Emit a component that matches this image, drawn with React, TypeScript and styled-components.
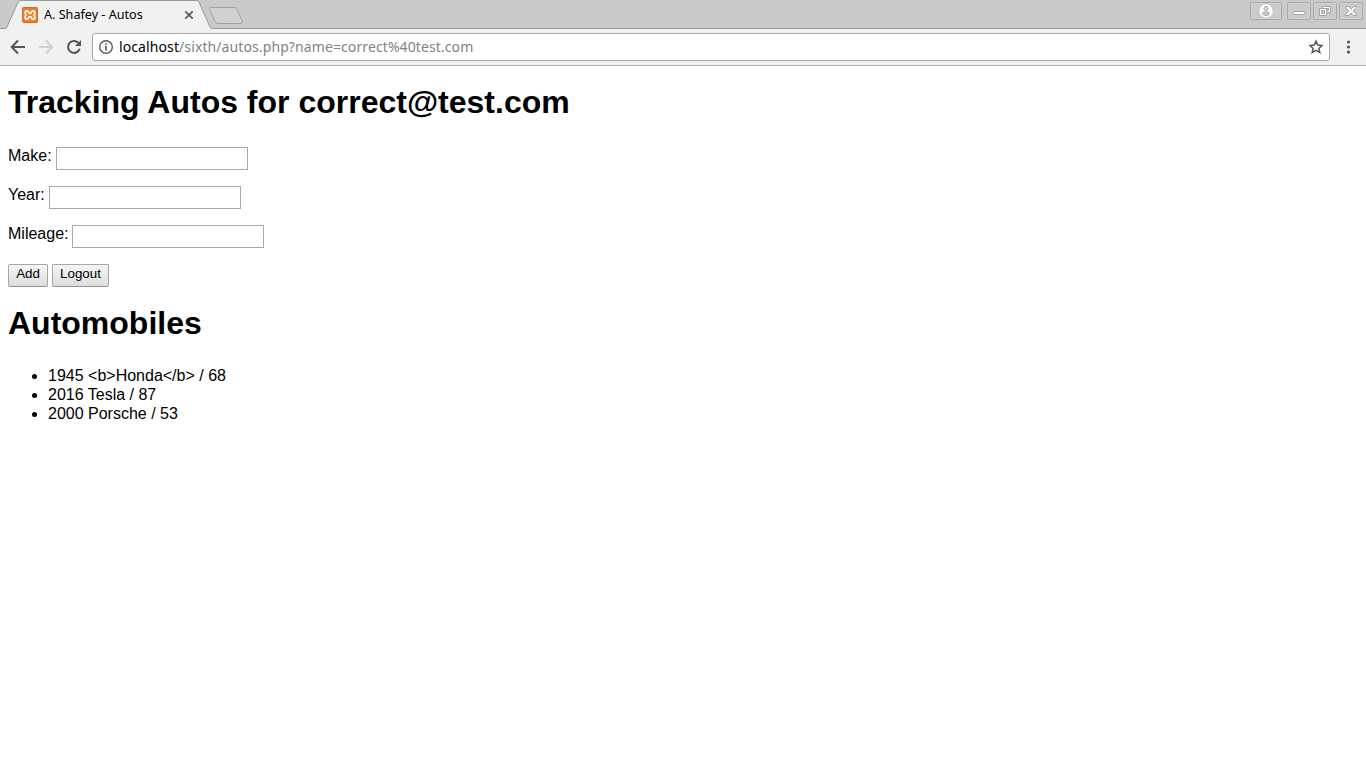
import React from "react";
import styled, { createGlobalStyle } from "styled-components";

const GlobalStyle = createGlobalStyle`
  body { margin: 0; background: #fff; }
  * { box-sizing: border-box; }
`;

const Browser = styled.div`
  height: 768px;
  overflow: hidden;
  display: flex;
  flex-direction: column;
  font-family: "Noto Sans", sans-serif;
`;

const TabStrip = styled.header`
  height: 29px;
  flex: none;
  display: flex;
  align-items: flex-start;
  background: #cacaca;
  box-shadow: inset 0 -1px #9b9b9b;
`;

const Tab = styled.div`
  position: relative;
  width: 213px;
  height: 29px;
  display: flex;
  align-items: center;
  padding: 1px 0 0 22px;
`;

const TabShape = styled.svg`
  position: absolute;
  left: 0;
  top: 0;
`;

const Favicon = styled.svg`
  position: relative;
  flex: none;
  margin-right: 6px;
`;

const TabTitle = styled.span`
  position: relative;
  width: 140px;
  font-size: 12.6px;
  line-height: 18px;
  color: #000;
  white-space: nowrap;
`;

const CloseIcon = styled.svg`
  position: relative;
  flex: none;
`;

const NewTab = styled.svg`
  margin: 6px 0 0 -5px;
  position: relative;
`;

const WindowControls = styled.div`
  display: flex;
  gap: 2px;
  margin: 2px 3px 0 auto;
`;

const WindowButton = styled.div<{ $width: number; $gapAfter?: number }>`
  width: ${(p) => p.$width}px;
  height: 18px;
  margin-right: ${(p) => p.$gapAfter ?? 0}px;
  display: flex;
  align-items: center;
  justify-content: center;
  border: 1px solid #a9a9a9;
  border-radius: 2px;
  background: #cbcbcb;
  box-shadow: inset 0 0 0 1px #d0d0d0;
`;

const Toolbar = styled.nav`
  height: 37px;
  flex: none;
  display: flex;
  align-items: center;
  padding: 0 10px 1px 10px;
  background: #f1f1f1;
  border-bottom: 1px solid #b4b4b4;
`;

const ToolIcon = styled.svg<{ $gap: number }>`
  flex: none;
  margin-right: ${(p) => p.$gap}px;
`;

const AddressBar = styled.div`
  flex: none;
  width: 1238px;
  height: 28px;
  display: flex;
  align-items: center;
  padding: 0 5px;
  border: 1px solid #a6a6a6;
  border-radius: 3px;
  background: #fff;
`;

const Url = styled.span`
  flex: 1;
  margin-left: 5px;
  font-size: 14px;
  letter-spacing: 0.1px;
  line-height: 20px;
  color: #838383;
  white-space: nowrap;
`;

const Host = styled.span`
  color: #000;
`;

const Page = styled.main`
  flex: 1;
  padding: 18px 8px 0;
  color: #000;
  font-family: "Liberation Sans", Arial, sans-serif;
  font-size: 16px;
  line-height: 19px;
`;

const Heading = styled.h1`
  margin: 0;
  font-size: 32px;
  line-height: 37px;
  font-weight: bold;
  white-space: nowrap;
`;

const Form = styled.form`
  display: flex;
  flex-direction: column;
  gap: 16px;
  padding: 26px 0 18px;
`;

const Row = styled.div`
  height: 23px;
  display: flex;
  align-items: flex-start;
  gap: 4px;
`;

const Label = styled.label<{ $width: number }>`
  width: ${(p) => p.$width}px;
  line-height: 18px;
  white-space: nowrap;
`;

const Field = styled.input`
  width: 192px;
  height: 23px;
  margin: 0;
  padding: 1px;
  border: 1px solid #a9a9a9;
  border-radius: 0;
  background: #fff;
  outline: none;
`;

const Button = styled.button<{ $width: number }>`
  width: ${(p) => p.$width}px;
  height: 23px;
  padding: 0 0 3px;
  border: 1px solid #a6a6a6;
  border-bottom-color: #959595;
  border-radius: 2px;
  background: linear-gradient(#f6f6f6, #dddddd);
  color: #000;
  font: 13.33px/18px "Liberation Sans", Arial, sans-serif;
`;

const AutoList = styled.ul`
  margin: 24px 0 0;
  padding-left: 40px;
`;

const fields = [
  { label: "Make:", name: "make", width: 44 },
  { label: "Year:", name: "year", width: 37 },
  { label: "Mileage:", name: "mileage", width: 60 },
];

const autos = ["1945 <b>Honda</b> / 68", "2016 Tesla / 87", "2000 Porsche / 53"];

export default function App() {
  return (
    <Browser>
      <GlobalStyle />
      <TabStrip>
        <Tab>
          <TabShape width="213" height="29">
            <path d="M0 29V28.5H5Q6.3 28.5 7 27L18 2.2Q18.8 .5 20.5 .5H196.5Q198.2 .5 199 2.2L210 27Q210.7 28.5 213 28.5V29Z" fill="#f1f1f1" />
            <path d="M0 28.5H5Q6.3 28.5 7 27L18 2.2Q18.8 .5 20.5 .5H196.5Q198.2 .5 199 2.2L210 27Q210.7 28.5 213 28.5" fill="none" stroke="#999" />
          </TabShape>
          <Favicon width="16" height="16" viewBox="0 0 16 16">
            <rect x=".5" y=".5" width="15" height="15" rx="1" fill="#f47b25" stroke="#d8691f" />
            <path d="M4.8 3.8Q6.3 3.8 6.6 5.2Q6.8 6.5 8 6.5Q9.2 6.5 9.4 5.2Q9.7 3.8 11.2 3.8Q12.8 3.8 12.8 5.6Q12.8 7.2 11.9 8Q12.8 8.8 12.8 10.4Q12.8 12.2 11.2 12.2Q9.7 12.2 9.4 10.8Q9.2 9.5 8 9.5Q6.8 9.5 6.6 10.8Q6.3 12.2 4.8 12.2Q3.2 12.2 3.2 10.4Q3.2 8.8 4.1 8Q3.2 7.2 3.2 5.6Q3.2 3.8 4.8 3.8Z" fill="none" stroke="#fff" strokeWidth="1.7" strokeLinejoin="round" />
          </Favicon>
          <TabTitle>A. Shafey - Autos</TabTitle>
          <CloseIcon width="10" height="10" viewBox="0 0 10 10">
            <path d="M1.3 1.3L8.7 8.7M8.7 1.3L1.3 8.7" stroke="#5b5b5b" strokeWidth="1.7" />
          </CloseIcon>
        </Tab>
        <NewTab width="37" height="20">
          <path d="M3 1.5H26Q28 1.5 29 3.5L34.5 16Q35 17.5 33 17.5H10Q8 17.5 7 15.5L1.5 3.5Q1 1.5 3 1.5Z" fill="#d1d1d1" stroke="#a0a0a0" />
        </NewTab>
        <WindowControls>
          <WindowButton $width={32} $gapAfter={3}>
            <svg width="16" height="16" viewBox="0 0 16 16">
              <circle cx="8" cy="8" r="7" fill="#fff" stroke="#b5b5b5" strokeWidth=".5" />
              <circle cx="8" cy="5.5" r="2" fill="#ddd" stroke="#a5a5a5" />
              <path d="M4 10.5Q5 8.9 8 8.9Q11 8.9 12 10.5Q10.5 12.5 8 12.5Q5.5 12.5 4 10.5Z" fill="#ccc" stroke="#a5a5a5" />
            </svg>
          </WindowButton>
          <WindowButton $width={24}>
            <svg width="14" height="14"><rect x="1.5" y="7.5" width="11" height="3" rx="1" fill="#fff" stroke="#a1a1a1" /></svg>
          </WindowButton>
          <WindowButton $width={24}>
            <svg width="14" height="14">
              <path d="M4.5 2.5H12.5V8.5H4.5Z" fill="#fff" stroke="#a1a1a1" />
              <path d="M6.5 4.5H10.5V6.5H6.5Z" fill="#ccc" stroke="#a1a1a1" />
              <path d="M1.5 4.5H8.5V11.5H1.5Z" fill="#fff" stroke="#a1a1a1" />
              <path d="M3.5 6.5H6.5V9.5H3.5Z" fill="#ccc" stroke="#a1a1a1" />
            </svg>
          </WindowButton>
          <WindowButton $width={24}>
            <svg width="14" height="14">
              <path d="M1.5 2.5H4.5L7 4.9L9.5 2.5H12.5V3.8L9.2 7L12.5 10.2V11.5H9.5L7 9.1L4.5 11.5H1.5V10.2L4.8 7L1.5 3.8Z" fill="#f4f4f4" stroke="#a1a1a1" />
            </svg>
          </WindowButton>
        </WindowControls>
      </TabStrip>
      <Toolbar>
        <ToolIcon $gap={12} width="16" height="16" viewBox="0 0 16 16">
          <path d="M15 8H2M8 1.5L1.7 8L8 14.5" fill="none" stroke="#555" strokeWidth="2" />
        </ToolIcon>
        <ToolIcon $gap={12} width="16" height="16" viewBox="0 0 16 16">
          <path d="M1 8H14M8 1.5L14.3 8L8 14.5" fill="none" stroke="#d0d0d0" strokeWidth="2" />
        </ToolIcon>
        <ToolIcon $gap={10} width="16" height="16" viewBox="0 0 16 16">
          <path d="M12.3 3.7A6 6 0 1 0 13.7 9.8" fill="none" stroke="#555" strokeWidth="2" />
          <path d="M15 1V7H9Z" fill="#555" />
        </ToolIcon>
        <AddressBar>
          <svg width="16" height="16" viewBox="0 0 16 16">
            <circle cx="8" cy="8" r="6.3" fill="none" stroke="#5a5a5a" strokeWidth="1.4" />
            <path d="M8 7V11.5M8 4.3V5.8" stroke="#5a5a5a" strokeWidth="1.7" />
          </svg>
          <Url><Host>localhost</Host>/sixth/autos.php?name=correct%40test.com</Url>
          <svg width="16" height="16" viewBox="0 0 16 16">
            <path d="M8 2.2L9.7 6.1L14 6.5L10.8 9.4L11.8 13.6L8 11.4L4.2 13.6L5.2 9.4L2 6.5L6.3 6.1Z" fill="none" stroke="#555" strokeWidth="1.5" />
          </svg>
        </AddressBar>
        <svg width="36" height="16">
          <circle cx="18.5" cy="3" r="1.6" fill="#555" />
          <circle cx="18.5" cy="8" r="1.6" fill="#555" />
          <circle cx="18.5" cy="13" r="1.6" fill="#555" />
        </svg>
      </Toolbar>
      <Page>
        <Heading>Tracking Autos for correct@test.com</Heading>
        <Form onSubmit={(e) => e.preventDefault()}>
          {fields.map((f) => (
            <Row key={f.name}>
              <Label $width={f.width} htmlFor={f.name}>{f.label}</Label>
              <Field id={f.name} name={f.name} />
            </Row>
          ))}
          <Row>
            <Button $width={40}>Add</Button>
            <Button $width={57}>Logout</Button>
          </Row>
        </Form>
        <Heading>Automobiles</Heading>
        <AutoList>
          {autos.map((a) => <li key={a}>{a}</li>)}
        </AutoList>
      </Page>
    </Browser>
  );
}
